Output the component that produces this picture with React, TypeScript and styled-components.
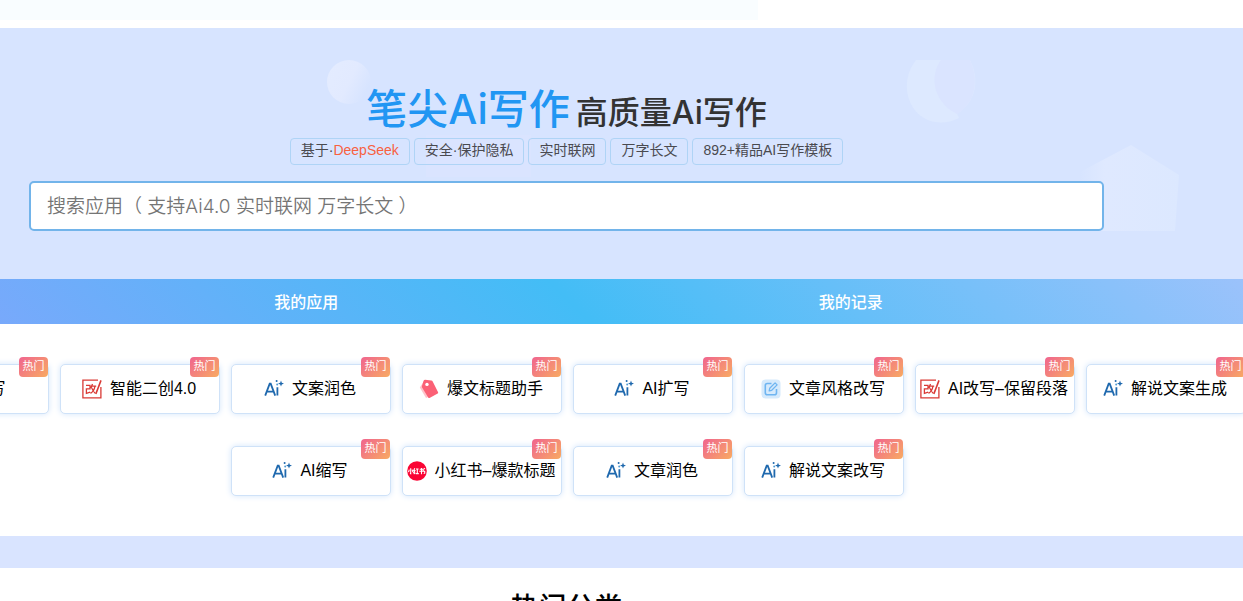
import React from "react";
import styled, { createGlobalStyle } from "styled-components";

const GlobalStyle = createGlobalStyle`
  * { box-sizing: border-box; }
  body {
    margin: 0;
    background: #fff;
    color: #000;
    font-family: "Liberation Sans", "Noto Sans CJK SC", sans-serif;
    overflow-x: hidden;
  }
`;

const Page = styled.main`
  display: flex;
  flex-direction: column;
  min-height: 100vh;
  overflow: hidden;
`;

const TopStrip = styled.div`
  width: 61%;
  height: 20px;
  margin-bottom: 8px;
  background: #f9fdff;
`;

const Hero = styled.section`
  position: relative;
  padding: 56px 139px 48px 29px;
  background: #d7e4ff;
`;

const Backdrop = styled.svg`
  position: absolute;
  top: 0;
  left: 0;
  pointer-events: none;
`;

const HeroContent = styled.div`
  position: relative;
  display: flex;
  flex-direction: column;
  align-items: center;
`;

const Title = styled.h1`
  display: flex;
  align-items: baseline;
  gap: 6px;
  margin: 0;
  font-family: Inter, "Noto Sans CJK SC", sans-serif;
  font-size: 32px;
  font-weight: 500;
  line-height: 50px;
  color: #333;
  white-space: nowrap;
`;

const Brand = styled.span`
  font-size: 41px;
  color: #2196f3;
`;

const Tags = styled.ul`
  display: flex;
  gap: 4px;
  margin: 0 0 16px;
  padding: 0;
  list-style: none;
`;

const Tag = styled.li`
  padding: 0 10px 2px;
  border: 1px solid #afd4f6;
  border-radius: 4px;
  font-size: 14px;
  line-height: 23px;
  color: #4a4a4f;
  white-space: nowrap;
`;

const Accent = styled.span`
  color: #f8613f;
`;

const SearchInput = styled.input`
  width: 100%;
  height: 50px;
  padding: 0 16px;
  border: 2px solid #72b4ea;
  border-radius: 5px;
  outline: none;
  background: #fff;
  font-family: Inter, "Noto Sans CJK SC", sans-serif;
  font-size: 19px;
  font-weight: 350;
  &::placeholder { color: #757575; opacity: 1; }
`;

const TabBar = styled.nav`
  display: flex;
  padding: 0 120px 0 34px;
  background: linear-gradient(45deg, #78a9fb 0%, #43bdf6 46%, #9bc2fb 100%);
`;

const Tab = styled.button`
  flex: 1;
  height: 45px;
  padding: 0 0 2px;
  border: 0;
  background: none;
  color: #fff;
  font-family: inherit;
  font-size: 16px;
  font-weight: 500;
`;

const Apps = styled.section`
  display: flex;
  flex-direction: column;
  gap: 32px;
  padding: 40px 108px 40px 0;
`;

const AppRow = styled.div`
  display: flex;
  justify-content: center;
  gap: 11px;
`;

const AppCard = styled.a`
  position: relative;
  display: flex;
  flex: 0 0 160px;
  align-items: center;
  justify-content: center;
  gap: 8px;
  height: 50px;
  padding: 0 2px 0 0;
  border: 1px solid #cfe2f8;
  border-radius: 5px;
  background: #fff;
  box-shadow: 0 0 6px #d3e5fb;
  color: #000;
  font-size: 16px;
  text-decoration: none;
  white-space: nowrap;
`;

const AppName = styled.span`
  line-height: 24px;
`;

const HotBadge = styled.span`
  position: absolute;
  top: -8px;
  right: 0;
  width: 29px;
  height: 20px;
  border-radius: 4px;
  background: linear-gradient(135deg, #f0648f, #f8ab62);
  color: #fff;
  font-size: 11px;
  line-height: 19px;
  text-align: center;
`;

const Divider = styled.div`
  height: 32px;
  background: #d9e4ff;
`;

const Categories = styled.section`
  height: 33px;
  padding: 20px 110px 0 0;
`;

const CategoryTitle = styled.h2`
  margin: 0;
  font-size: 28px;
  font-weight: 500;
  line-height: 42px;
  text-align: center;
`;

type IconKind = "ai" | "rewrite" | "tag" | "edit" | "red";

const AppIcon = ({ kind }: { kind: IconKind }) => (
  <svg width="20" height="20" viewBox="0 0 20 20" fill="none" aria-hidden="true">
    {kind === "ai" && (
      <>
        <path d="M1.2 16.6 5.7 4.6h1l4.5 12M3 12.6h6.5M13.4 8.2v8.4" stroke="#1f69ae" strokeWidth="1.8" />
        <path d="M17 1.6l.8 2.2 2.2.8-2.2.8-.8 2.2-.8-2.2-2.2-.8 2.2-.8z" fill="#1f69ae" />
        <circle cx="12.6" cy="2" r="1" fill="#1f69ae" />
        <circle cx="13.2" cy="5.6" r="1" fill="#4f9ad2" />
      </>
    )}
    {kind === "rewrite" && (
      <g stroke="#d93a35" strokeWidth="1.3">
        <path d="M16 1.2H.9v17.6h18V8" />
        <path d="M19 1.4 13.8 15" strokeWidth="1.6" />
        <path d="M4 6.4h4v3.4H4.4v4.5l3.8-1.2M10.5 5 8.8 9M10 7.2h4.2M13 7.2c-.6 3.4-2 5.8-4.5 7.2M9.6 8.6c1 2.8 2.1 4.5 3.6 5.6" />
      </g>
    )}
    {kind === "tag" && (
      <>
        <path d="M5 2 .8 8.5 7 19l7-3.2z" fill="#ffc4cb" />
        <path d="M4.6 1.8c.3-.7.8-1 1.5-1l6.2.6c.7.1 1.1.4 1.4 1l5.4 10.8c.2.5.1 1-.4 1.3l-8.2 4.4c-.5.3-1 .1-1.3-.4L3.1 8.6c-.3-.6-.3-1.1-.1-1.7z" fill="#fb6176" />
        <circle cx="8" cy="5.4" r="1.7" fill="#fff" />
      </>
    )}
    {kind === "edit" && (
      <>
        <rect x=".5" y=".5" width="19" height="19" rx="4" fill="#d6eafc" />
        <path d="M10.5 4.5H6.3A2 2 0 0 0 4.3 6.5v7.2a2 2 0 0 0 2 2h7.2a2 2 0 0 0 2-2V10" stroke="#6fb5f1" strokeWidth="1.6" />
        <path d="M8.2 11.8l.5-2.5 5.4-5.4 2 2-5.4 5.4z" stroke="#6fb5f1" strokeWidth="1.3" strokeLinejoin="round" />
      </>
    )}
    {kind === "red" && (
      <>
        <circle cx="10" cy="10" r="9.8" fill="#fa0534" />
        <g stroke="#fff" strokeWidth="1.1">
          <path d="M3.7 7.2v5.6l-.8-.3M2.3 8.7l-.8 2.5M5.1 8.7l.8 2.5" />
          <path d="M7.8 7.2 6.7 9.5h1.2L6.7 11.5l1.6-.3M6.6 12.8l1.7-.4M9 8h2.6M10.3 8v4.4M8.8 12.6h3" />
          <path d="M12.8 8.2h3.4v2M12.3 10.2h5.4v2l-1 .3M14.5 7v6.2M16.9 7.2l1 .9" />
        </g>
      </>
    )}
  </svg>
);

const rows: { icon: IconKind; name: string }[][] = [
  [
    { icon: "ai", name: "AI改写" },
    { icon: "rewrite", name: "智能二创4.0" },
    { icon: "ai", name: "文案润色" },
    { icon: "tag", name: "爆文标题助手" },
    { icon: "ai", name: "AI扩写" },
    { icon: "edit", name: "文章风格改写" },
    { icon: "rewrite", name: "AI改写–保留段落" },
    { icon: "ai", name: "解说文案生成" },
  ],
  [
    { icon: "ai", name: "AI缩写" },
    { icon: "red", name: "小红书–爆款标题" },
    { icon: "ai", name: "文章润色" },
    { icon: "ai", name: "解说文案改写" },
  ],
];

export default function App() {
  return (
    <Page>
      <GlobalStyle />
      <TopStrip />
      <Hero>
        <Backdrop width="1243" height="251" viewBox="0 0 1243 251" aria-hidden="true">
          <defs>
            <linearGradient id="orb" x1="0" y1="0" x2="1" y2=".5">
              <stop offset="0" stopColor="#e4ecff" />
              <stop offset=".6" stopColor="#e2eaff" />
              <stop offset="1" stopColor="#d7e4ff" />
            </linearGradient>
            <linearGradient id="house" x1="0" y1="0" x2="1" y2="0">
              <stop offset="0" stopColor="#d7e4ff" />
              <stop offset=".25" stopColor="#dfe9ff" />
              <stop offset="1" stopColor="#dce8ff" />
            </linearGradient>
          </defs>
          <ellipse cx="349" cy="54" rx="22" ry="22" fill="url(#orb)" />
          <path d="M916 32h54c10 20 6 42-13 54l2 4c-22 11-45 1-51-22-3-13 0-26 8-36z" fill="#dde9ff" />
          <path d="M941 32h29c9 20 6 42-13 54-24-12-28-38-16-54z" fill="#dae4ff" />
          <path d="M1080 144l51-27 48 30-4 56h-95z" fill="url(#house)" />
          <rect x="426" y="107" width="105" height="42" fill="#dae4ff" />
        </Backdrop>
        <HeroContent>
          <Title>
            <Brand>笔尖Ai写作</Brand>
            高质量Ai写作
          </Title>
          <Tags>
            <Tag>基于·<Accent>DeepSeek</Accent></Tag>
            <Tag>安全·保护隐私</Tag>
            <Tag>实时联网</Tag>
            <Tag>万字长文</Tag>
            <Tag>892+精品AI写作模板</Tag>
          </Tags>
          <SearchInput
            type="search"
            aria-label="搜索应用"
            placeholder="搜索应用（ 支持Ai4.0 实时联网 万字长文 ）"
          />
        </HeroContent>
      </Hero>
      <TabBar>
        <Tab type="button">我的应用</Tab>
        <Tab type="button">我的记录</Tab>
      </TabBar>
      <Apps>
        {rows.map((row, index) => (
          <AppRow key={index}>
            {row.map((app) => (
              <AppCard key={app.name} href="#">
                <AppIcon kind={app.icon} />
                <AppName>{app.name}</AppName>
                <HotBadge>热门</HotBadge>
              </AppCard>
            ))}
          </AppRow>
        ))}
      </Apps>
      <Divider />
      <Categories>
        <CategoryTitle>热门分类</CategoryTitle>
      </Categories>
    </Page>
  );
}
